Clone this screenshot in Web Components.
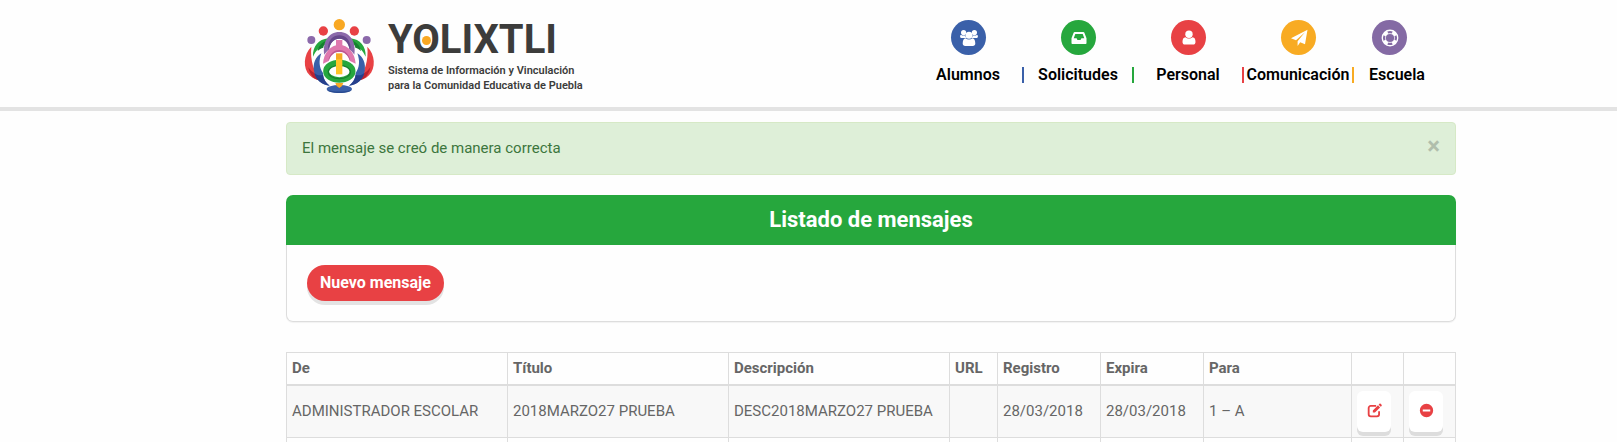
<!DOCTYPE html>
<html lang="es">
<head>
<meta charset="utf-8">
<title>Yolixtli</title>
<style>
html{background:#fefefe}
body{margin:0;overflow:hidden;font:15px/21px Roboto,"Open Sans",sans-serif;color:#666}
main{display:block;max-width:1170px;margin:0 auto;padding-left:125px}
</style>
</head>
<body>
<site-header>
  <site-logo></site-logo>
  <site-nav>
    <nav-item label="Alumnos" icon="users" style="--tone:#3a60a9"></nav-item>
    <nav-item label="Solicitudes" icon="inbox" style="--tone:#26a73d"></nav-item>
    <nav-item label="Personal" icon="user" style="--tone:#e84144"></nav-item>
    <nav-item label="Comunicación" icon="plane" style="--tone:#f8ab23"></nav-item>
    <nav-item label="Escuela" icon="ring" last style="--tone:#846aa4"></nav-item>
  </site-nav>
</site-header>
<main>
  <alert-box>El mensaje se creó de manera correcta</alert-box>
  <titled-panel><span slot="title">Listado de mensajes</span><pill-button>Nuevo mensaje</pill-button></titled-panel>
  <message-table></message-table>
</main>
<script>
const ICONS = {
  users:'<circle cx="3.6" cy="3.6" r="2.6"/><circle cx="14.4" cy="3.6" r="2.6"/><path d="M2 6.500h3.200c.2 1 .6 1.900 1.300 2.500H1.500C.6 9 .1 8.300.1 7.500.1 6.400.6 5.500 2 6.500zM16 6.500h-3.200c-.2 1-.6 1.900-1.300 2.500h5c.9 0 1.400-.7 1.400-1.500 0-1.100-.5-2-1.900-1z"/><circle cx="9" cy="6.200" r="3.500"/><path d="M5.600 9.300c1 .8 2.100 1.200 3.400 1.200s2.400-.4 3.400-1.200c2 .2 2.900 2.200 2.900 5.200 0 1.500-1 2.500-2.500 2.500H5.200c-1.500 0-2.500-1-2.500-2.500 0-3 .9-5 2.900-5.200z"/>',
  inbox:'<path fill-rule="evenodd" d="M4.700 3h8.600c.5 0 .9.300 1.100.8l2.100 5.400v5c0 .5-.4.800-.8.800H2.300c-.4 0-.8-.3-.8-.8v-5l2.100-5.400c.2-.5.6-.8 1.100-.8zM5.300 5 3.700 9.200h2.900l.9 1.800h3l.9-1.800h2.900L12.700 5z"/>',
  user:'<circle cx="9" cy="5.200" r="3.700"/><path d="M5.400 8.200c1 .9 2.200 1.400 3.600 1.400s2.600-.5 3.600-1.400c2 .1 2.900 2 2.900 4.700 0 1.600-1 2.600-2.500 2.600H5c-1.500 0-2.500-1-2.500-2.600 0-2.700.9-4.600 2.900-4.700z"/>',
  plane:'<path d="M17.500.8 15 15.300l-4.800-2L7.600 17v-4.700L15 3.300 6 11.200l-5-2z"/>',
  ring:'<path fill-rule="evenodd" d="M9 .6a8.400 8.400 0 1 1 0 16.800A8.400 8.400 0 0 1 9 .6zm0 4.300a4.100 4.100 0 1 0 0 8.200 4.100 4.100 0 0 0 0-8.200zM6.300 2.500l1 2a5.300 5.300 0 0 1 3.400 0l1-2a7.300 7.300 0 0 0-5.400 0zm0 13a7.300 7.300 0 0 0 5.400 0l-1-2a5.300 5.300 0 0 1-3.400 0zm-3.800-9.200a7.300 7.300 0 0 0 0 5.400l2-1a5.300 5.300 0 0 1 0-3.400zm13 0-2 1a5.300 5.300 0 0 1 0 3.400l2 1a7.300 7.300 0 0 0 0-5.400z"/>',
  edit:'<path fill="none" stroke="currentColor" stroke-width="2.2" d="M11 3.500H4.500A2.500 2.500 0 0 0 2 6v7.500A2.500 2.500 0 0 0 4.500 16H12a2.500 2.500 0 0 0 2.500-2.500V10"/><path d="m7 9 6.200-6.200 2.500 2.500L9.500 11.500H7zM14 2l1-1c.4-.4.900-.4 1.300 0l1.200 1.200c.4.400.4.900 0 1.300l-1 1z"/>',
  minus:'<path fill-rule="evenodd" d="M9 1a8 8 0 1 1 0 16A8 8 0 0 1 9 1zM4.500 7.700v2.600h9V7.700z"/>'
};
const icon = n => `<svg viewBox="0 0 18 18" fill="currentColor" aria-hidden="true">${ICONS[n]}</svg>`;
const define = (name, render) => customElements.define(name, class extends HTMLElement {
  constructor(){ super(); this.attachShadow({mode:'open'}); }
  connectedCallback(){ this.shadowRoot.innerHTML = render(this); }
});

define('site-header', () => `<style>
:host{display:block;background:#fefefe;border-bottom:4px solid #e3e3e3}
div{box-sizing:border-box;display:flex;align-items:flex-start;justify-content:space-between;max-width:1295px;height:107px;margin:0 auto;padding:12px 31px 0 139px}
</style><div><slot></slot></div>`);

define('site-logo', () => `<style>
:host{display:block}
a{display:flex;gap:8px;color:#3c3c3b;text-decoration:none}
svg{width:80px;height:86px;flex:none}
.words{display:flex;flex-direction:column;padding-top:8px;font-weight:600;font-size:11px;line-height:15px;white-space:nowrap}
.name{font-size:40px;line-height:40px;font-weight:700;margin-bottom:3px}
.o{position:relative}
.o::after{content:"";position:absolute;left:50%;top:50%;width:9px;height:9px;margin:-4px;border-radius:50%;background:#f8a823}
</style><a href="#">
<svg viewBox="0 0 240 258" aria-hidden="true">
<circle cx="118" cy="38" r="17" fill="#f8a823"/>
<circle cx="70" cy="57" r="14" fill="#e84144"/><circle cx="163" cy="57" r="14" fill="#e84144"/>
<circle cx="34" cy="84" r="12" fill="#8b69aa"/><circle cx="200" cy="84" r="12" fill="#8b69aa"/>
<g id="side">
<path fill="#e84144" d="M34 104C10 128 8 168 29 190c10 10 22 15 33 15-20-25-32-59-28-101z"/>
<path fill="#b92330" d="M25 166c5 8 12 14 18 17 4 9 11 17 19 22-16 0-32-12-37-39z"/>
<path fill="#26a73d" d="M39 134c-1-31 16-52 46-55-4 6-7 13-9 20-16 4-28 16-37 35z"/>
<path fill="#16802f" d="M53 117c2-13 11-25 24-30-3 6-6 14-7 20-7 2-12 5-17 10z"/>
<path fill="#3a60a9" d="M64 124c-18 11-26 31-22 53 5 25 23 42 47 44-14-11-20-24-20-38-12-17-13-36-5-59z"/>
<path fill="#263f8c" d="M43 183c8 7 17 9 26 5 1 13 9 25 20 33-25-3-41-17-46-38z"/>
</g>
<use href="#side" transform="matrix(-1 0 0 1 236 0)"/>
<path fill="#8b69aa" d="M73 128c-6-37 12-68 45-68s51 31 45 68c-4-6-8-11-14-15-3-20-14-33-31-33S90 93 87 113c-6 4-10 9-14 15z"/>
<path fill="#65488b" d="M84 106c2-23 16-36 34-36s32 13 34 36l-3 7c-3-20-14-33-31-33S90 93 87 113z"/>
<rect x="108" y="84" width="19" height="24" fill="#df78ae"/>
<path fill="#df78ae" d="M69 155c2-33 23-56 49-56s47 23 49 56l-17-8c-5-18-17-28-32-28s-27 10-32 28z"/>
<path fill="#bd5791" d="M86 140c6-17 17-26 32-26s26 9 32 26v7c-5-18-17-28-32-28s-27 10-32 28z"/>
<ellipse cx="118" cy="178" rx="40" ry="26" fill="none" stroke="#26a73d" stroke-width="17"/>
<ellipse cx="118" cy="180" rx="33" ry="20" fill="none" stroke="#16802f" stroke-width="4"/>
<path fill="#f8a823" d="M108 124h19v20h-19z"/><path fill="#ffc527" d="M108 142h19v45h-19z"/>
<ellipse cx="118" cy="231" rx="38" ry="12" fill="#3a60a9"/><path fill="#f8a823" d="M106 213h24l-4 9-8 6-8-6z"/>
<path fill="#294b91" d="M81 233c13 7 61 7 74 0-5 13-68 13-74 0z"/>
</svg>
<span class="words"><span class="name">Y<span class="o">O</span>LIXTLI</span><span>Sistema de Información y Vinculación</span><span>para la Comunidad Educativa de Puebla</span></span></a>`);

define('site-nav', () => `<style>:host{display:block;padding-top:8px}nav{display:flex}</style><nav><slot></slot></nav>`);

define('nav-item', el => `<style>
:host{display:block;width:110px}
:host([last]){width:71px}
a{display:flex;flex-direction:column;gap:12px;color:#000;text-decoration:none;font-weight:600;font-size:16px;line-height:16px;text-align:center}
i{display:flex;align-items:center;justify-content:center;align-self:center;width:35px;height:35px;border-radius:50%;background:var(--tone);color:#fff}
a:not(.last) i{margin-right:1px}
svg{width:18px;height:18px}
.label{border-right:2px solid var(--tone)}
.last .label{border:0;padding-left:15px}
</style><a href="#" class="${el.hasAttribute('last')?'last':''}"><i>${icon(el.getAttribute('icon'))}</i><span class="label">${el.getAttribute('label')}</span></a>`);

define('alert-box', () => `<style>
:host{display:flex;justify-content:space-between;align-items:flex-start;margin:11px 0 20px;padding:15px;border:1px solid #d6e9c6;border-radius:4px;background:#deefd8;color:#3c763d}
button{padding:0;border:0;background:none;font:700 24px/16px Roboto,sans-serif;color:#000;opacity:.2}
</style><span role="status"><slot></slot></span><button aria-label="Cerrar">×</button>`);

define('titled-panel', () => `<style>
:host{display:block;margin-bottom:30px;border-radius:7px;box-shadow:0 1px 1px rgba(0,0,0,.05)}
h2{margin:0;padding:10px;background:#26a73d;color:#fff;border-radius:7px 7px 0 0;font-size:22px;line-height:30px;text-align:center}
div{padding:20px;border:1px solid #ddd;border-top:0;border-radius:0 0 7px 7px}
</style><h2><slot name="title"></slot></h2><div><slot></slot></div>`);

define('pill-button', () => `<style>
:host{display:block}
button{display:block;height:36px;padding:0 13px;border:0;border-radius:18px;background:#e84144;box-shadow:0 4px #e3e3e3;color:#fff;font:700 16px/36px Roboto,sans-serif}
</style><button><slot></slot></button>`);

define('icon-button', el => `<style>
:host{display:block}
button{display:flex;align-items:center;justify-content:center;width:34px;height:41px;padding:0 0 3px;border:0;border-radius:6px;background:#fff;box-shadow:0 4px #ddd;color:#e84144}
svg{width:15px;height:15px}
</style><button aria-label="${el.getAttribute('label')}">${icon(el.getAttribute('icon'))}</button>`);

define('message-table', () => `<style>
:host{display:block}
table{width:100%;table-layout:fixed;border-collapse:collapse}
th,td{border:1px solid #ddd;padding:5px;text-align:left;white-space:nowrap}
th{border-bottom-width:2px}
tbody tr:nth-child(odd){background:#f8f8f8}
.url{width:37px}.date{width:92px}.to{width:137px}.act{width:41px}
</style><table>
<thead><tr><th>De</th><th>Título</th><th>Descripción</th><th class="url">URL</th><th class="date">Registro</th><th class="date">Expira</th><th class="to">Para</th><th class="act"></th><th class="act"></th></tr></thead>
<tbody><tr><td>ADMINISTRADOR ESCOLAR</td><td>2018MARZO27 PRUEBA</td><td>DESC2018MARZO27 PRUEBA</td><td></td><td>28/03/2018</td><td>28/03/2018</td><td>1 – A</td><td><icon-button icon="edit" label="Editar"></icon-button></td><td><icon-button icon="minus" label="Eliminar"></icon-button></td></tr>
<tr><td></td><td></td><td></td><td></td><td></td><td></td><td></td><td></td><td></td></tr></tbody></table>`);
</script>
</body>
</html>
